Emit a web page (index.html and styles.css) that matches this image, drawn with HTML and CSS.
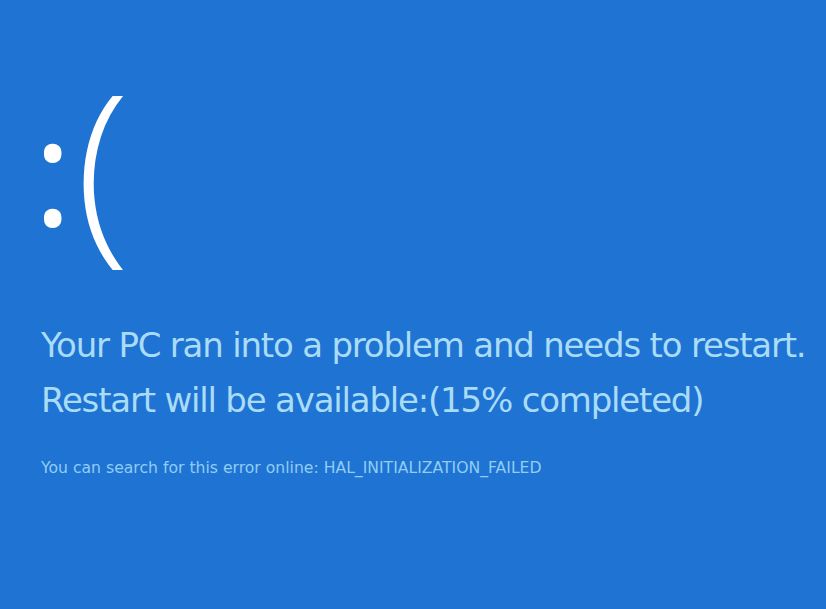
FILE: index.html
```html
<!DOCTYPE html>
<html>
<head>
<meta charset="utf-8">
<link rel="stylesheet" href="styles.css">
</head>
<body>
<main class="screen">
  <div class="face"><span class="colon">:</span><span class="paren">(</span></div>
  <p class="headline">Your PC ran into a problem and needs to restart.</p>
  <p class="headline">Restart will be available:(15% completed)</p>
  <p class="info">You can search for this error online: HAL_INITIALIZATION_FAILED</p>
</main>
</body>
</html>
```
FILE: styles.css
```css
html, body {
  margin: 0;
  padding: 0;
  width: 826px;
  height: 609px;
  overflow: hidden;
  background: #1f73d3;
}
.screen {
  padding: 51px 0 0 41px;
  font-family: "DejaVu Sans", sans-serif;
}
.face {
  font-family: "Open Sans", sans-serif;
  color: #ffffff;
  height: 267px;
  line-height: 220px;
  white-space: nowrap;
}
.colon {
  font-size: 150px;
  font-weight: 500;
  vertical-align: 12px;
  margin-left: -8px;
}
.paren {
  font-size: 199px;
  font-weight: 300;
  margin-left: 3px;
}
.headline {
  margin: 0;
  color: #a9dcf7;
  font-size: 34px;
  line-height: 55px;
  letter-spacing: -1.2px;
}
.info {
  margin: 30px 0 0 0;
  color: #8fcdf3;
  font-size: 15.65px;
}
```
